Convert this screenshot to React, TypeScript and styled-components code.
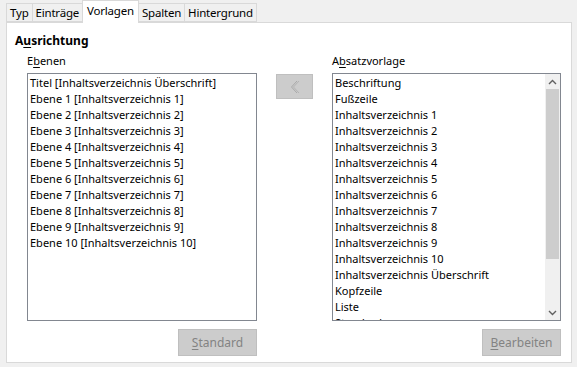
import React from 'react';
import styled, {createGlobalStyle} from 'styled-components';

const TABS = ['Typ', 'Einträge', 'Vorlagen', 'Spalten', 'Hintergrund'];
const ACTIVE_TAB = 'Vorlagen';

const LEVELS = [
  'Titel [Inhaltsverzeichnis Überschrift]',
  'Ebene 1 [Inhaltsverzeichnis 1]',
  'Ebene 2 [Inhaltsverzeichnis 2]',
  'Ebene 3 [Inhaltsverzeichnis 3]',
  'Ebene 4 [Inhaltsverzeichnis 4]',
  'Ebene 5 [Inhaltsverzeichnis 5]',
  'Ebene 6 [Inhaltsverzeichnis 6]',
  'Ebene 7 [Inhaltsverzeichnis 7]',
  'Ebene 8 [Inhaltsverzeichnis 8]',
  'Ebene 9 [Inhaltsverzeichnis 9]',
  'Ebene 10 [Inhaltsverzeichnis 10]',
];

const STYLES = [
  'Beschriftung',
  'Fußzeile',
  'Inhaltsverzeichnis 1',
  'Inhaltsverzeichnis 2',
  'Inhaltsverzeichnis 3',
  'Inhaltsverzeichnis 4',
  'Inhaltsverzeichnis 5',
  'Inhaltsverzeichnis 6',
  'Inhaltsverzeichnis 7',
  'Inhaltsverzeichnis 8',
  'Inhaltsverzeichnis 9',
  'Inhaltsverzeichnis 10',
  'Inhaltsverzeichnis Überschrift',
  'Kopfzeile',
  'Liste',
  'Standard',
];

const GlobalStyle = createGlobalStyle`
  html, body {
    margin: 0;
    padding: 0;
    background: #F0F0F0;
  }
  body {
    font-family: "Noto Sans", "Open Sans", sans-serif;
    font-size: 11px;
    color: #000000;
  }
`;

const Dialog = styled.div`
  width: 577px;
  height: 367px;
  background: #F0F0F0;
  display: flex;
  flex-direction: column;
  overflow: hidden;
`;

const TabBar = styled.div`
  display: flex;
  align-items: flex-end;
  height: 22px;
  padding-left: 6px;
  position: relative;
  z-index: 1;
`;

const Tab = styled.div<{$active?: boolean}>`
  box-sizing: border-box;
  height: ${p => (p.$active ? '23px' : '19px')};
  padding: ${p => (p.$active ? '0 4px 2px' : '0 3px')};
  margin-bottom: ${p => (p.$active ? '-1px' : '0')};
  background: ${p => (p.$active ? '#FFFFFF' : '#F0F0F0')};
  border: 1px solid #D9D9D9;
  border-bottom: ${p => (p.$active ? 'none' : '1px solid #D9D9D9')};
  margin-right: -1px;
  display: flex;
  align-items: center;
  line-height: 16px;
  font-size: 11.5px;
  letter-spacing: -0.2px;
  white-space: nowrap;
`;

const Panel = styled.div`
  box-sizing: border-box;
  margin-left: 6px;
  width: 566px;
  height: 341px;
  background: #FFFFFF;
  border: 1px solid #D9D9D9;
  padding: 10px 8px 0;
`;

const Heading = styled.div`
  font-weight: bold;
  font-size: 12px;
  line-height: 16px;
`;

const Body = styled.div`
  margin: 4px 0 0 12px;
  display: grid;
  grid-template-columns: 230px 37px 229px;
  column-gap: 19px;
  grid-template-rows: 20px 248px 35px;
`;

const Label = styled.div`
  line-height: 16px;
`;

const Mnemonic = styled.span`
  text-decoration: underline;
  text-underline-offset: 2px;
`;

const ListBox = styled.div`
  box-sizing: border-box;
  border: 1px solid #828790;
  background: #FFFFFF;
  display: flex;
  overflow: hidden;
  height: 248px;
`;

const Items = styled.div`
  flex: 1;
  padding: 1px 0 0 2px;
  overflow: hidden;
`;

const Item = styled.div`
  line-height: 16px;
  height: 16px;
  white-space: nowrap;
`;

const Scrollbar = styled.div`
  width: 15px;
  display: flex;
  flex-direction: column;
  background: #F0F0F0;
  border-left: 1px solid #FFFFFF;
`;

const ScrollArrow = styled.div`
  height: 15px;
  display: flex;
  align-items: center;
  justify-content: center;
`;

const ScrollTrack = styled.div`
  flex: 1;
  display: flex;
  flex-direction: column;
  padding: 0 1px;
`;

const Thumb = styled.div`
  height: 170px;
  background: #CDCDCD;
`;

const MoveButton = styled.div`
  margin-top: 1px;
  box-sizing: border-box;
  height: 25px;
  width: 37px;
  background: #CCCCCC;
  border: 1px solid #BFBFBF;
  display: flex;
  align-items: center;
  justify-content: center;
`;

const ButtonRow = styled.div`
  display: flex;
  justify-content: flex-end;
  align-items: flex-start;
  padding-top: 8px;
`;

const Button = styled.div`
  box-sizing: border-box;
  width: 79px;
  height: 27px;
  background: #CCCCCC;
  border: 1px solid #BFBFBF;
  color: #838383;
  display: flex;
  align-items: center;
  justify-content: center;
  line-height: 16px;
  font-size: 12px;
`;

const Chevron = ({up}: {up: boolean}) => (
  <svg width="9" height="6" viewBox="0 0 9 6">
    <path
      d={up ? 'M1 5 L4.5 1.5 L8 5' : 'M1 1 L4.5 4.5 L8 1'}
      fill="none"
      stroke="#606060"
      strokeWidth="1.4"
    />
  </svg>
);

const DoubleLeft = () => (
  <svg width="10" height="14" viewBox="0 0 10 14">
    <path d="M7 1 L1.5 7 L7 13" fill="none" stroke="#A8A8A8" strokeWidth="1" />
    <path d="M9 1 L3.5 7 L9 13" fill="none" stroke="#B4B4B4" strokeWidth="1" />
  </svg>
);

const App = () => {
  return (
    <Dialog>
      <GlobalStyle />
      <TabBar>
        {TABS.map(t => (
          <Tab key={t} $active={t === ACTIVE_TAB}>{t}</Tab>
        ))}
      </TabBar>
      <Panel>
        <Heading>A<Mnemonic>u</Mnemonic>srichtung</Heading>
        <Body>
          <Label>E<Mnemonic>b</Mnemonic>enen</Label>
          <div />
          <Label>A<Mnemonic>b</Mnemonic>satzvorlage</Label>

          <ListBox>
            <Items>
              {LEVELS.map(l => <Item key={l}>{l}</Item>)}
            </Items>
          </ListBox>
          <div>
            <MoveButton><DoubleLeft /></MoveButton>
          </div>
          <ListBox>
            <Items>
              {STYLES.map(s => <Item key={s}>{s}</Item>)}
            </Items>
            <Scrollbar>
              <ScrollArrow><Chevron up /></ScrollArrow>
              <ScrollTrack><Thumb /></ScrollTrack>
              <ScrollArrow><Chevron up={false} /></ScrollArrow>
            </Scrollbar>
          </ListBox>

          <ButtonRow>
            <Button><Mnemonic>S</Mnemonic>tandard</Button>
          </ButtonRow>
          <div />
          <ButtonRow>
            <Button><Mnemonic>B</Mnemonic>earbeiten</Button>
          </ButtonRow>
        </Body>
      </Panel>
    </Dialog>
  );
};

export default App;
